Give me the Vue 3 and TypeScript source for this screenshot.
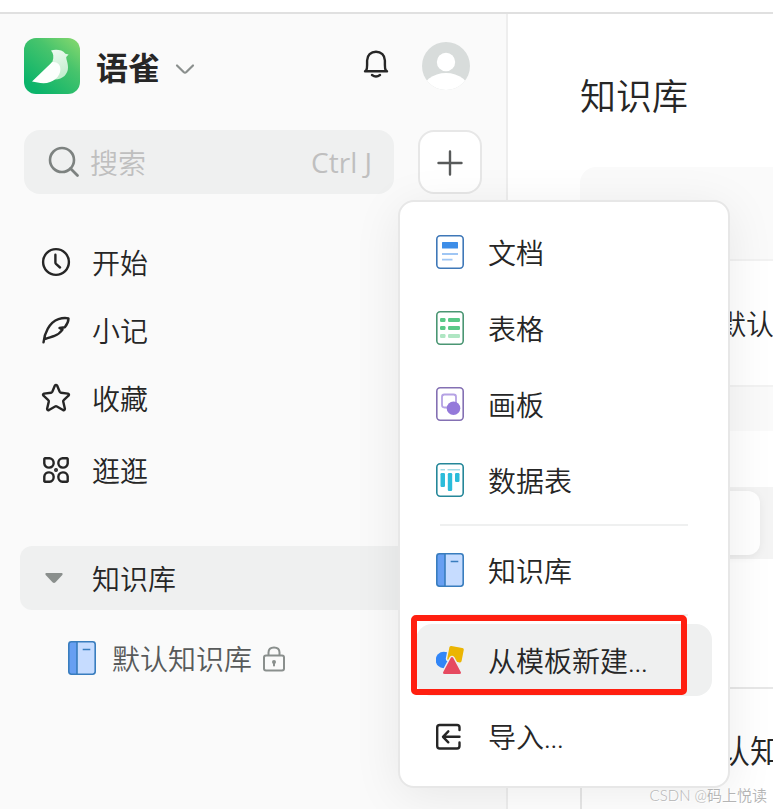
<script setup lang="ts">
import { ref } from 'vue'

type MenuKind = 'doc' | 'sheet' | 'board' | 'data' | 'book' | 'template' | 'import'

interface MenuEntry {
  kind: MenuKind
  label: string
}

const menuGroups: MenuEntry[][] = [
  [
    { kind: 'doc', label: '文档' },
    { kind: 'sheet', label: '表格' },
    { kind: 'board', label: '画板' },
    { kind: 'data', label: '数据表' },
  ],
  [{ kind: 'book', label: '知识库' }],
  [
    { kind: 'template', label: '从模板新建...' },
    { kind: 'import', label: '导入...' },
  ],
]

const active = ref<MenuKind>('template')
const keyword = ref('')
</script>

<template>
  <div class="page">
    <div class="topline"></div>
    <div class="shell">
      <aside class="sidebar">
        <header class="brand-row">
          <svg class="logo" viewBox="0 0 56 56" aria-hidden="true">
            <defs>
              <linearGradient id="logo-bg" x1="0.2" y1="0.9" x2="0.95" y2="0">
                <stop offset="0" stop-color="#0bb46a" />
                <stop offset="0.6" stop-color="#48c46c" />
                <stop offset="1" stop-color="#86d86e" />
              </linearGradient>
              <linearGradient id="logo-body" x1="0" y1="0" x2="0.4" y2="1">
                <stop offset="0" stop-color="#f4fcf6" />
                <stop offset="1" stop-color="#c4eed0" />
              </linearGradient>
            </defs>
            <rect width="56" height="56" rx="12" fill="url(#logo-bg)" />
            <path d="M27 12.400C31 11.400 38 11 41.400 15.800L44.600 16.400L42.200 19C42.200 22 44 24.500 44 29.500C44 36 39 41.400 31 41.400L18 38L28.500 23.500C30 19 29.500 15 27 12.400Z" fill="url(#logo-body)" />
            <path d="M8 43.400L28 24.200C33 23.500 36.400 26.500 36.400 31.500C36.400 38.500 29 45.200 19.500 45.200C15 45.200 12 43.700 8 43.400Z" fill="#fcfffd" />
          </svg>
          <button class="brand" type="button">
            <span class="brand-name">语雀</span>
            <svg class="chevron" viewBox="0 0 20 12" aria-hidden="true">
              <path d="M2 2.500L8.600 9Q10 10.200 11.400 9L18 2.500" fill="none" stroke="#8a8f8d" stroke-width="2.200" stroke-linecap="round" />
            </svg>
          </button>
          <button class="bell" type="button" aria-label="通知">
            <svg viewBox="0 0 28 32" aria-hidden="true">
              <path d="M4.300 20C5 19 5.100 17 5.100 15V10.500C5.100 5.500 8.900 1.700 14 1.700S22.900 5.500 22.900 10.500V15C22.900 17 23 19 23.700 20L25 21.300H3Z" fill="none" stroke="#262626" stroke-width="2.400" stroke-linecap="round" stroke-linejoin="round" />
              <path d="M10 25Q14 28 18 25" fill="none" stroke="#262626" stroke-width="2.400" stroke-linecap="round" />
            </svg>
          </button>
          <svg class="avatar" viewBox="0 0 48 48" role="img" aria-label="头像">
            <defs><clipPath id="avatar-clip"><circle cx="24" cy="24" r="24" /></clipPath></defs>
            <g clip-path="url(#avatar-clip)">
              <rect width="48" height="48" fill="#d8dcdb" />
              <circle cx="24" cy="20" r="9.200" fill="#fff" />
              <ellipse cx="24" cy="50" rx="24" ry="19" fill="#fff" />
            </g>
          </svg>
        </header>

        <div class="search-row">
          <label class="search">
            <svg class="search-icon" viewBox="0 0 32 32" aria-hidden="true">
              <circle cx="14" cy="14" r="12" fill="none" stroke="#7d8280" stroke-width="2.600" />
              <path d="M22.500 22.500L29.500 29.500" stroke="#7d8280" stroke-width="2.800" stroke-linecap="round" />
            </svg>
            <input v-model="keyword" type="text" placeholder="搜索" aria-label="搜索" />
            <kbd>Ctrl J</kbd>
          </label>
          <div class="create">
            <button class="add" type="button" aria-label="新建" aria-expanded="true">
              <svg viewBox="0 0 28 28" aria-hidden="true">
                <path d="M14 3.500V26.500M2.500 15H25.500" stroke="#585a5a" stroke-width="2.400" stroke-linecap="round" />
              </svg>
            </button>
            <div class="menu" role="menu">
              <template v-for="(group, index) in menuGroups" :key="index">
                <hr v-if="index > 0" />
                <button
                  v-for="entry in group"
                  :key="entry.kind"
                  class="menu-item"
                  :class="{ active: entry.kind === active }"
                  type="button"
                  role="menuitem"
                  @mouseenter="active = entry.kind"
                >
                  <svg class="menu-icon" viewBox="0 0 28 34" aria-hidden="true">
                    <g v-if="entry.kind === 'doc'">
                      <rect x="0.800" y="0.800" width="26.400" height="32.400" rx="3.400" fill="#fff" stroke="#3f78b8" stroke-width="1.600" />
                      <rect x="6" y="7" width="16" height="6.500" rx="0.500" fill="#3e8ee8" />
                      <path d="M6 19H22M6 24.700H16.500" stroke="#9fc6f4" stroke-width="1.800" />
                    </g>
                    <g v-else-if="entry.kind === 'sheet'">
                      <rect x="0.800" y="0.800" width="26.400" height="32.400" rx="3.400" fill="#fff" stroke="#4a9673" stroke-width="1.600" />
                      <g fill="#59c987">
                        <rect x="4" y="7" width="5.500" height="4" rx="1.200" />
                        <rect x="12" y="7" width="12" height="4" rx="1.200" />
                        <rect x="4" y="15" width="5.500" height="4" rx="1.200" />
                        <rect x="12" y="15" width="12" height="4" rx="1.200" />
                      </g>
                      <g fill="#afe6c3">
                        <rect x="4" y="23" width="5.500" height="4" rx="1.200" />
                        <rect x="12" y="23" width="12" height="4" rx="1.200" />
                      </g>
                    </g>
                    <g v-else-if="entry.kind === 'board'">
                      <rect x="0.800" y="0.800" width="26.400" height="32.400" rx="3.400" fill="#fff" stroke="#8470b3" stroke-width="1.600" />
                      <rect x="6" y="7.500" width="14" height="13" rx="2.400" fill="#fff" stroke="#b5a2e4" stroke-width="1.800" />
                      <circle cx="17.500" cy="21.300" r="6.800" fill="#9479da" />
                    </g>
                    <g v-else-if="entry.kind === 'data'">
                      <rect x="0.800" y="0.800" width="26.400" height="32.400" rx="3.400" fill="#fff" stroke="#258799" stroke-width="1.600" />
                      <path d="M4.500 6.800H9M11.500 6.800H24" stroke="#a5dce7" stroke-width="1.500" />
                      <g fill="#2bbcda">
                        <rect x="4.500" y="10" width="4.500" height="14" rx="1.200" />
                        <rect x="11.800" y="10" width="4.400" height="18" rx="1.200" />
                        <rect x="19" y="10" width="4.500" height="9" rx="1.200" />
                      </g>
                    </g>
                    <g v-else-if="entry.kind === 'book'">
                      <rect x="0.800" y="0.800" width="26.400" height="32.400" rx="2.600" fill="#c6dcff" />
                      <path d="M9 0.800H3.400Q0.800 0.800 0.800 3.400V30.600Q0.800 33.200 3.400 33.200H9Z" fill="#679ff2" />
                      <rect x="0.800" y="0.800" width="26.400" height="32.400" rx="2.600" fill="none" stroke="#397dbe" stroke-width="1.600" />
                      <path d="M9 1V33M14.700 8.500H22.300" stroke="#397dbe" stroke-width="1.600" />
                    </g>
                    <g v-else-if="entry.kind === 'template'">
                      <circle cx="7.800" cy="17" r="8.200" fill="#3286f7" />
                      <rect x="11.500" y="3.200" width="16" height="16" rx="2.400" transform="rotate(11 19.500 11.200)" fill="#ebb503" stroke="#eff0f0" stroke-width="1.400" />
                      <path d="M14.200 14.400Q16 12.400 17.800 14.400L25.500 28.800Q26.300 31.700 23.500 31.700H8.500Q5.700 31.700 6.500 28.800Z" fill="#e64a60" stroke="#eff0f0" stroke-width="1.400" />
                    </g>
                    <g v-else fill="none" stroke="#262626" stroke-width="2.400" stroke-linecap="round" stroke-linejoin="round">
                      <path d="M23.500 11V8.500Q23.500 6 21 6H3.700Q1.200 6 1.200 8.500V27Q1.200 29.500 3.700 29.500H21Q23.500 29.500 23.500 27V23.500" />
                      <path d="M23.500 17.800H7.500M12.300 12.300L7 17.800L12.300 23.300" />
                    </g>
                  </svg>
                  <span>{{ entry.label }}</span>
                </button>
              </template>
            </div>
          </div>
        </div>

        <nav class="nav">
          <a href="#start">
            <svg viewBox="0 0 32 32" aria-hidden="true">
              <circle cx="16" cy="16" r="12.900" />
              <path d="M15.400 8.700V16.500Q15.400 17.300 16 17.900L20 21.500" />
            </svg>
            <span>开始</span>
          </a>
          <a href="#notes">
            <svg viewBox="0 0 32 32" aria-hidden="true">
              <path d="M3.500 28.300C4.500 19.500 9 8.500 18.500 5.200C22 4 26 3.900 28.500 4.400C28.500 7.500 27 10.500 24.800 13.200L19.500 14L22.500 15.600C20.500 18.500 17.500 20.800 14.500 21.900C11 23.100 8.300 23.800 5.600 24.800" />
            </svg>
            <span>小记</span>
          </a>
          <a href="#favorites">
            <svg viewBox="0 0 32 32" aria-hidden="true">
              <path d="M14.800 3.700Q16 2 17.200 3.700L19.700 9.800Q20.100 10.600 21 10.800L28 11.600Q29.700 12.200 28.500 13.700L23.700 18.100Q23 18.700 23.200 19.600L24.900 26.800Q24.900 28.700 23 28L16.900 24.500Q16 24 15.100 24.500L9 28Q7.100 28.700 7.100 26.800L8.800 19.600Q9 18.700 8.300 18.100L3.500 13.700Q2.300 12.200 4 11.600L11 10.800Q11.900 10.600 12.300 9.800Z" />
            </svg>
            <span>收藏</span>
          </a>
          <a class="explore" href="#explore">
            <svg viewBox="0 0 32 32" aria-hidden="true">
              <path d="M4.800 4.300H9.500A4.700 4.700 0 1 1 4.300 9.500V4.800Z" />
              <path d="M27.200 4.300H22.500A4.700 4.700 0 1 0 27.700 9.500V4.800Z" />
              <path d="M4.800 27.700H9.500A4.700 4.700 0 1 0 4.300 22.500V27.200Z" />
              <path d="M27.200 27.700H22.500A4.700 4.700 0 1 1 27.700 22.500V27.200Z" />
              <circle cx="16" cy="16" r="0.800" />
            </svg>
            <span>逛逛</span>
          </a>
        </nav>

        <button class="section" type="button" aria-expanded="true">
          <svg viewBox="0 0 20 12" aria-hidden="true">
            <path d="M2.200 1H17.800Q19.500 1.400 18.300 3L11.500 10.200Q10 11.600 8.500 10.200L1.700 3Q0.500 1.400 2.200 1Z" fill="#8a8f8d" />
          </svg>
          <span>知识库</span>
        </button>
        <a class="book-link" href="#default-book">
          <svg class="book-icon" viewBox="0 0 28 34" aria-hidden="true">
            <rect x="0.800" y="0.800" width="26.400" height="32.400" rx="2.600" fill="#c6dcff" />
            <path d="M9 0.800H3.400Q0.800 0.800 0.800 3.400V30.600Q0.800 33.200 3.400 33.200H9Z" fill="#679ff2" />
            <rect x="0.800" y="0.800" width="26.400" height="32.400" rx="2.600" fill="none" stroke="#397dbe" stroke-width="1.600" />
            <path d="M9 1V33M14.700 8.500H22.300" stroke="#397dbe" stroke-width="1.600" />
          </svg>
          <span>默认知识库</span>
          <svg class="lock-icon" viewBox="0 0 24 28" aria-hidden="true">
            <g fill="none" stroke="#8a8f8d" stroke-width="2">
              <rect x="2" y="11.500" width="20" height="15" rx="2" />
              <path d="M6.500 11.500V8.500Q6.500 3.500 12 3.500T17.500 8.500V11.500" />
            </g>
            <circle cx="12" cy="18" r="2" fill="#8a8f8d" />
            <path d="M12 18V21.500" stroke="#8a8f8d" stroke-width="2" stroke-linecap="round" />
          </svg>
        </a>
      </aside>

      <main class="main">
        <h1>知识库</h1>
        <section class="recent">
          <div class="recent-head"></div>
          <a class="recent-row" href="#recent-book">默认知识库</a>
          <div class="recent-foot"></div>
        </section>
        <div class="tabs"><button class="tab" type="button" aria-label="分组"></button></div>
        <section class="card"><h2>默认知识库</h2></section>
      </main>
    </div>
    <div class="watermark">CSDN @码上悦读</div>
  </div>
</template>

<style>
body {
  margin: 0;
}
</style>

<style scoped>
.page {
  position: relative;
  display: flex;
  flex-direction: column;
  height: 100vh;
  overflow: hidden;
  background: #fff;
  color: #262626;
  font-family: "Noto Sans CJK SC", sans-serif;
  font-size: 28px;
  font-weight: 350;
  line-height: 40px;
}
.page * {
  box-sizing: border-box;
}
button,
input,
kbd {
  padding: 0;
  border: 0;
  background: none;
  color: inherit;
  font: inherit;
}
a {
  color: inherit;
  text-decoration: none;
}
svg {
  display: block;
  flex: none;
}
.topline {
  flex: none;
  height: 14px;
  border-bottom: 2px solid #e0e0e0;
}
.shell {
  display: flex;
  flex: 1;
  min-height: 0;
}
.sidebar {
  position: relative;
  z-index: 1;
  flex: none;
  width: 508px;
  padding: 24px 24px 0;
  border-right: 2px solid #eeeeee;
  background: #fafafa;
}
.brand-row {
  display: flex;
  align-items: center;
  height: 56px;
  padding-right: 12px;
}
.logo {
  width: 56px;
  height: 56px;
}
.brand {
  display: flex;
  align-items: center;
  gap: 15px;
  margin-left: 16px;
}
.brand-name {
  font-size: 32px;
  font-weight: 700;
  line-height: 36px;
}
.chevron {
  width: 20px;
  height: 12px;
  margin-top: 6px;
}
.bell {
  margin-right: 32px;
  margin-left: auto;
}
.bell svg {
  width: 28px;
  height: 32px;
}
.avatar {
  width: 48px;
  height: 48px;
}
.search-row {
  display: flex;
  gap: 24px;
  margin-top: 36px;
}
.search {
  display: flex;
  flex: 1;
  align-items: center;
  min-width: 0;
  height: 64px;
  padding: 0 22px 0 24px;
  border-radius: 16px;
  background: #eff0f0;
}
.search-icon {
  width: 32px;
  height: 32px;
}
.search input {
  flex: 1;
  min-width: 0;
  margin-left: 10px;
  outline: none;
}
.search input::placeholder {
  color: #bfbfbf;
  opacity: 1;
}
.search kbd {
  color: #bfbfbf;
  font-family: "Open Sans", sans-serif;
  font-size: 28px;
  font-weight: 400;
}
.create {
  position: relative;
  flex: none;
}
.add {
  display: flex;
  align-items: center;
  justify-content: center;
  width: 64px;
  height: 64px;
  border: 2px solid #e7e7e7;
  border-radius: 16px;
  background: #fff;
}
.add svg {
  width: 28px;
  height: 28px;
}
.menu {
  position: absolute;
  top: 70px;
  left: -20px;
  display: flex;
  flex-direction: column;
  gap: 4px;
  width: 332px;
  padding: 14px 16px;
  border: 2px solid #e7e7e7;
  border-radius: 16px;
  background: #fff;
  box-shadow: 0 8px 48px rgba(0, 0, 0, 0.08);
}
.menu hr {
  width: 248px;
  height: 2px;
  margin: 4px 24px;
  border: 0;
  background: #eff0f0;
}
.menu-item {
  position: relative;
  display: flex;
  align-items: center;
  gap: 24px;
  height: 72px;
  padding: 0 20px;
  border-radius: 16px;
  font-family: Lato, "Noto Sans CJK SC", sans-serif;
  text-align: left;
  white-space: nowrap;
}
.menu-item span {
  padding-top: 2px;
}
.menu-item.active {
  background: #eff0f0;
}
.menu-item.active::after {
  position: absolute;
  top: -9px;
  right: 25px;
  bottom: 1px;
  left: -5px;
  border: 6px solid #ff1f10;
  border-radius: 5px;
  content: "";
}
.menu-icon,
.book-icon {
  width: 28px;
  height: 34px;
}
.nav {
  display: flex;
  flex-direction: column;
  margin-top: 34px;
}
.nav a {
  display: flex;
  align-items: center;
  gap: 20px;
  height: 68px;
  padding-left: 16px;
}
.nav .explore {
  margin-top: 4px;
}
.nav svg {
  width: 32px;
  height: 32px;
  fill: none;
  stroke: #262626;
  stroke-width: 2.4;
  stroke-linecap: round;
  stroke-linejoin: round;
}
.section {
  display: flex;
  align-items: center;
  gap: 28px;
  width: 100%;
  height: 64px;
  margin: 42px 0 0 -4px;
  padding-left: 24px;
  border-radius: 12px;
  background: #eff0f0;
}
.section svg {
  width: 20px;
  height: 12px;
}
.book-link {
  display: flex;
  align-items: center;
  height: 64px;
  margin-top: 16px;
  padding-left: 44px;
  color: #585a5a;
}
.book-link span {
  margin: 0 10px 0 16px;
}
.lock-icon {
  width: 24px;
  height: 28px;
}
.main {
  flex: 1;
  min-width: 0;
  overflow: hidden;
  padding: 56px 0 0 72px;
  white-space: nowrap;
}
h1,
h2 {
  margin: 0;
  font-weight: 350;
}
h1 {
  font-size: 36px;
  line-height: 48px;
}
.recent {
  margin-top: 49px;
  overflow: hidden;
  border-radius: 16px 0 0;
  background: #fafafa;
}
.recent-head {
  height: 92px;
}
.recent-row {
  display: block;
  padding: 42px 0 42px 138px;
  border: 2px solid #f2f2f2;
  border-width: 2px 0;
  background: #fff;
}
.recent-foot {
  height: 44px;
}
.tabs {
  margin-top: 56px;
  padding: 4px 13px 4px 0;
  background: #f4f4f4;
}
.tab {
  display: block;
  width: 100%;
  height: 64px;
  border-radius: 12px;
  background: #fff;
  box-shadow: 0 2px 8px rgba(0, 0, 0, 0.06);
}
.card {
  margin-top: 128px;
  padding: 38px 0 60px 104px;
  border: 2px solid #e7e7e7;
  border-right: 0;
  border-radius: 16px 0 0;
}
h2 {
  font-size: 32px;
  line-height: 44px;
}
.watermark {
  position: absolute;
  right: 6px;
  bottom: 4px;
  z-index: 2;
  color: #b4b4b4;
  font-family: Lato, "Noto Sans CJK SC", sans-serif;
  font-size: 15px;
  line-height: 20px;
  text-shadow: 1px 1px 0 #fff;
}
</style>
